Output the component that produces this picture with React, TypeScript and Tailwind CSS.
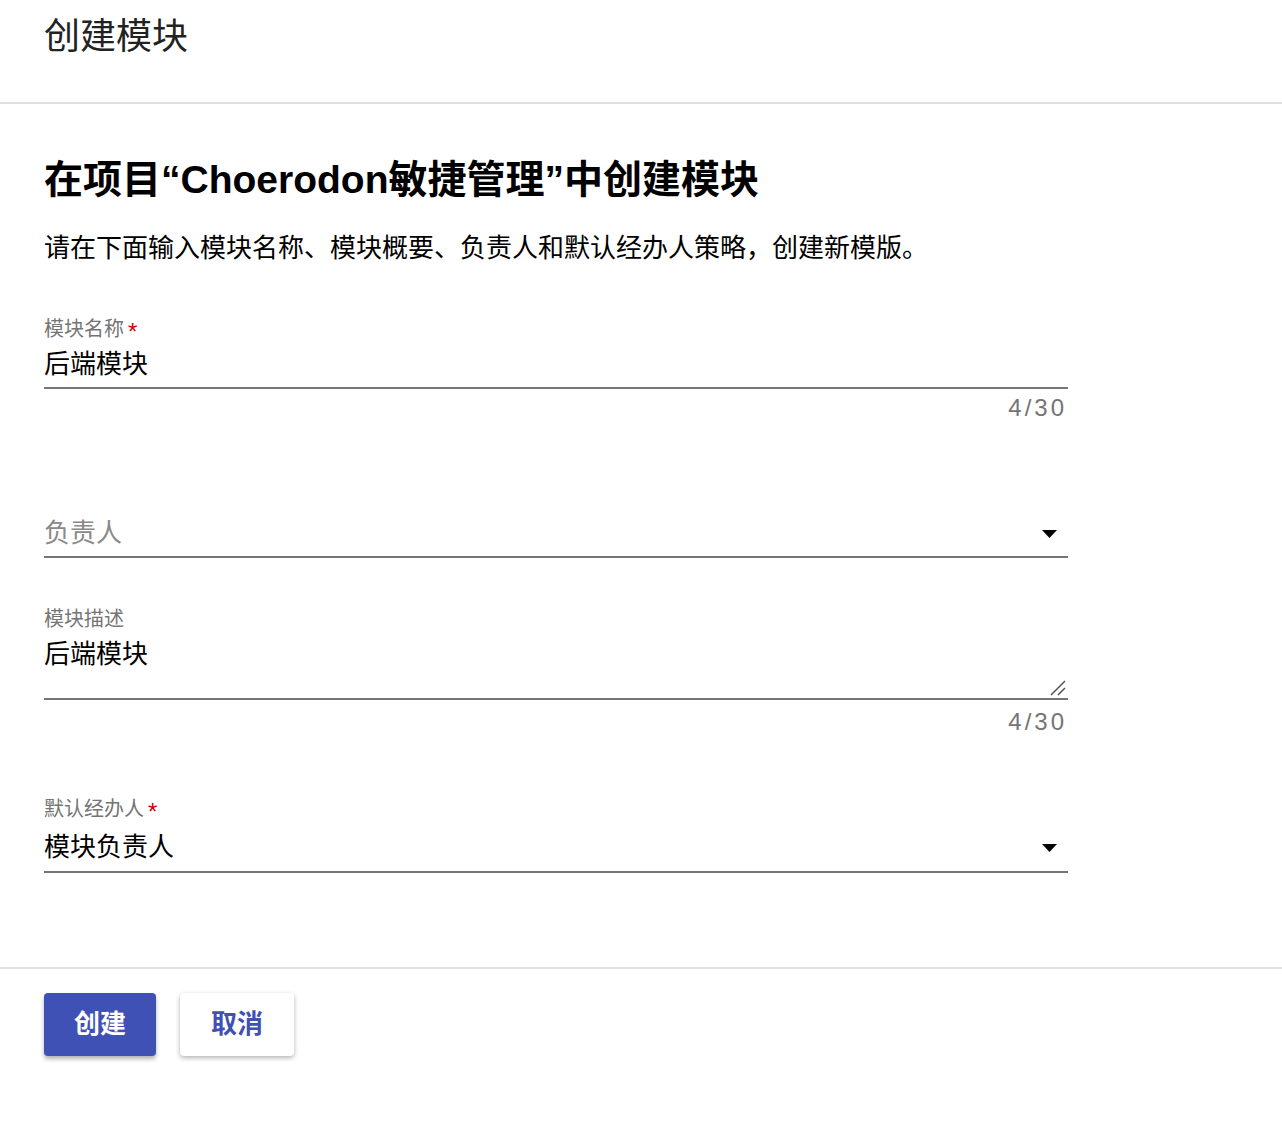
import React from "react"

function Arrow() {
  return (
    <svg className="absolute right-[11px] top-[15px]" width="15" height="8" viewBox="0 0 15 8">
      <path d="M0 0h15L7.5 8z" fill="#000" />
    </svg>
  )
}

function Counter({ value, className }: { value: string; className: string }) {
  return (
    <div className={`text-right pr-[1px] text-[24px] leading-[24px] tracking-[3px] text-[#757575] ${className}`}>
      {value}
    </div>
  )
}

function Star() {
  return <span className="ml-[4px] align-[-4px] text-[24px] leading-[0] text-[#d50000]">*</span>
}

export default function App() {
  return (
    <div className="min-h-[1138px] bg-white font-['Liberation_Sans','Noto_Sans_CJK_SC',sans-serif] text-black">
      {/* Header */}
      <div className="h-[104px] border-b-2 border-[#e0e0e0] px-[44px] pt-[13px]">
        <h1 className="text-[36px] leading-[48px] text-[#222]">创建模块</h1>
      </div>

      <div className="px-[44px] pt-[52px]">
        <h2 className="text-[39px] font-semibold leading-[48px]">在项目“Choerodon敏捷管理”中创建模块</h2>
        <p className="mt-[26px] text-[26px] leading-[36px]">
          请在下面输入模块名称、模块概要、负责人和默认经办人策略，创建新模版。
        </p>

        <div className="w-[1024px]">
          {/* 模块名称 */}
          <div className="mt-[51px]">
            <label className="block text-[20px] leading-[24px] text-[#757575]">
              模块名称<Star />
            </label>
            <div className="mt-[5px] border-b-2 border-[#757575] pb-[5px] text-[26px] leading-[36px]">后端模块</div>
            <Counter value="4/30" className="mt-[7px]" />
          </div>

          {/* 负责人 */}
          <div className="relative mt-[95px] border-b-2 border-[#757575] pb-[5px]">
            <div className="text-[26px] leading-[36px] text-[#8a8a8a]">负责人</div>
            <Arrow />
          </div>

          {/* 模块描述 */}
          <div className="mt-[49px]">
            <label className="block text-[20px] leading-[24px] text-[#757575]">模块描述</label>
            <div className="relative mt-[5px] h-[64px] border-b-2 border-[#757575] text-[26px] leading-[36px]">
              后端模块
              <svg className="absolute bottom-[2px] right-[2px]" width="16" height="16" viewBox="0 0 16 16">
                <path d="M1 15L15 1M8 15L15 8" stroke="#555" strokeWidth="1.5" />
              </svg>
            </div>
            <Counter value="4/30" className="mt-[10px]" />
          </div>

          {/* 默认经办人 */}
          <div className="mt-[63px]">
            <label className="block text-[20px] leading-[24px] text-[#757575]">
              默认经办人<Star />
            </label>
            <div className="relative mt-[8px] border-b-2 border-[#757575] pb-[6px]">
              <div className="text-[26px] leading-[36px]">模块负责人</div>
              <Arrow />
            </div>
          </div>
        </div>
      </div>

      {/* Footer */}
      <div className="mt-[94px] flex gap-[24px] border-t-2 border-[#e0e0e0] px-[44px] pt-[24px]">
        <button className="h-[63px] w-[112px] rounded-[4px] bg-[#3f51b5] text-[26px] font-bold text-white shadow-[0_3px_4px_rgba(0,0,0,0.3)]">
          创建
        </button>
        <button className="h-[63px] w-[114px] rounded-[4px] bg-white text-[26px] font-bold text-[#3f51b5] shadow-[0_2px_5px_rgba(0,0,0,0.3)]">
          取消
        </button>
      </div>
    </div>
  )
}
